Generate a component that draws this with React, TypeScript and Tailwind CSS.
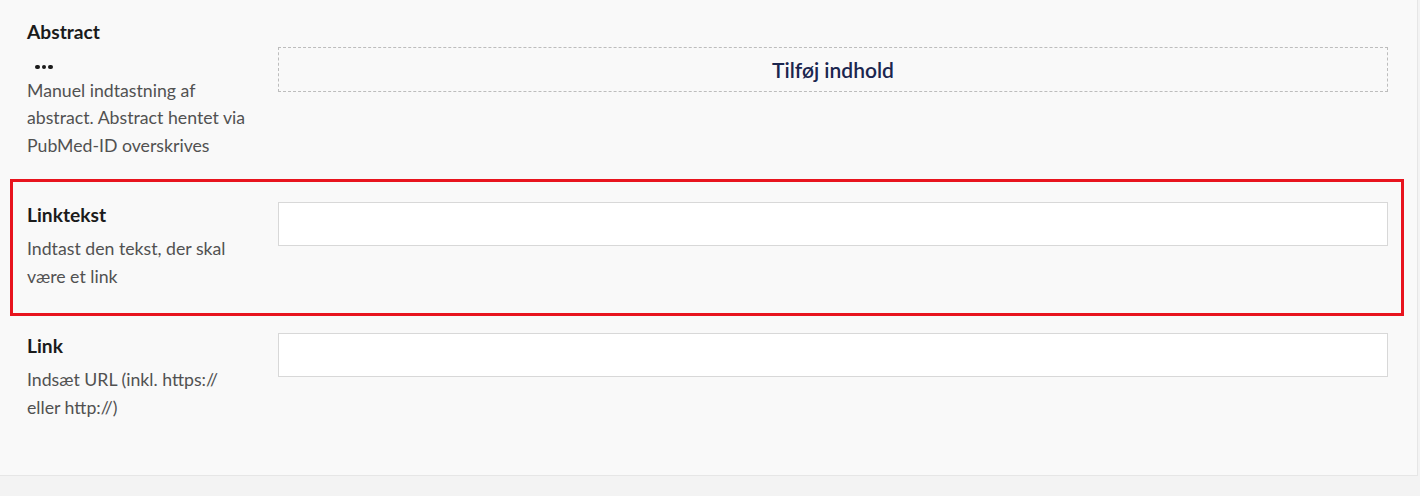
import React from 'react';

type FieldProps = {
  label: string;
  description: string;
  dots?: boolean;
  children: React.ReactNode;
};

const Field: React.FC<FieldProps> = ({ label, description, dots, children }) => {
  return (
    <div className="flex pl-[14px] pr-[13px] pt-[20px] pb-[23px]">
      <div className="w-[224px] shrink-0 mr-[27px]">
        <div className={`${dots ? '' : 'mt-[1px]'} text-[19.2px] leading-[24px] font-bold text-[#1b1b1b]`}>{label}</div>
        {dots && (
          <div className="flex items-center gap-[2px] h-[19.5px] mt-[13px] pl-[8px]">
            <span className="w-[4.5px] h-[4.5px] rounded-full bg-[#1b1b1b]" />
            <span className="w-[4.5px] h-[4.5px] rounded-full bg-[#1b1b1b]" />
            <span className="w-[4.5px] h-[4.5px] rounded-full bg-[#1b1b1b]" />
          </div>
        )}
        <p className={`${dots ? '' : 'mt-[8px]'} text-[17.7px] leading-[27.5px] text-[#515151]`}>{description}</p>
      </div>
      <div className="flex-1">{children}</div>
    </div>
  );
};

const TextInput: React.FC = () => (
  <input type="text" className="block w-full h-[44px] bg-white border border-[#d8d8d8] outline-none px-3" />
);

export default function App() {
  return (
    <div className="min-h-[496px] bg-[#f3f3f3]" style={{ fontFamily: 'Lato, "Noto Sans", sans-serif' }}>
      <div className="w-[1418px] h-[476px] bg-[#f9f9f9] border-r border-b border-[#e6e6e6] pl-[13px] pr-[16px]">
        <Field label="Abstract" description="Manuel indtastning af abstract. Abstract hentet via PubMed-ID overskrives" dots>
          <button className="mt-[27px] w-full h-[45px] border border-dashed border-[#bdbdbd] flex items-center justify-center text-[21px] font-semibold text-[#1b264f]">
            Tilføj indhold
          </button>
        </Field>
        <div className="-m-[3px] border-[3px] border-[#e8141e]">
          <Field label="Linktekst" description="Indtast den tekst, der skal være et link">
            <TextInput />
          </Field>
        </div>
        <Field label="Link" description="Indsæt URL (inkl. https:// eller http://)">
          <TextInput />
        </Field>
      </div>
    </div>
  );
}
